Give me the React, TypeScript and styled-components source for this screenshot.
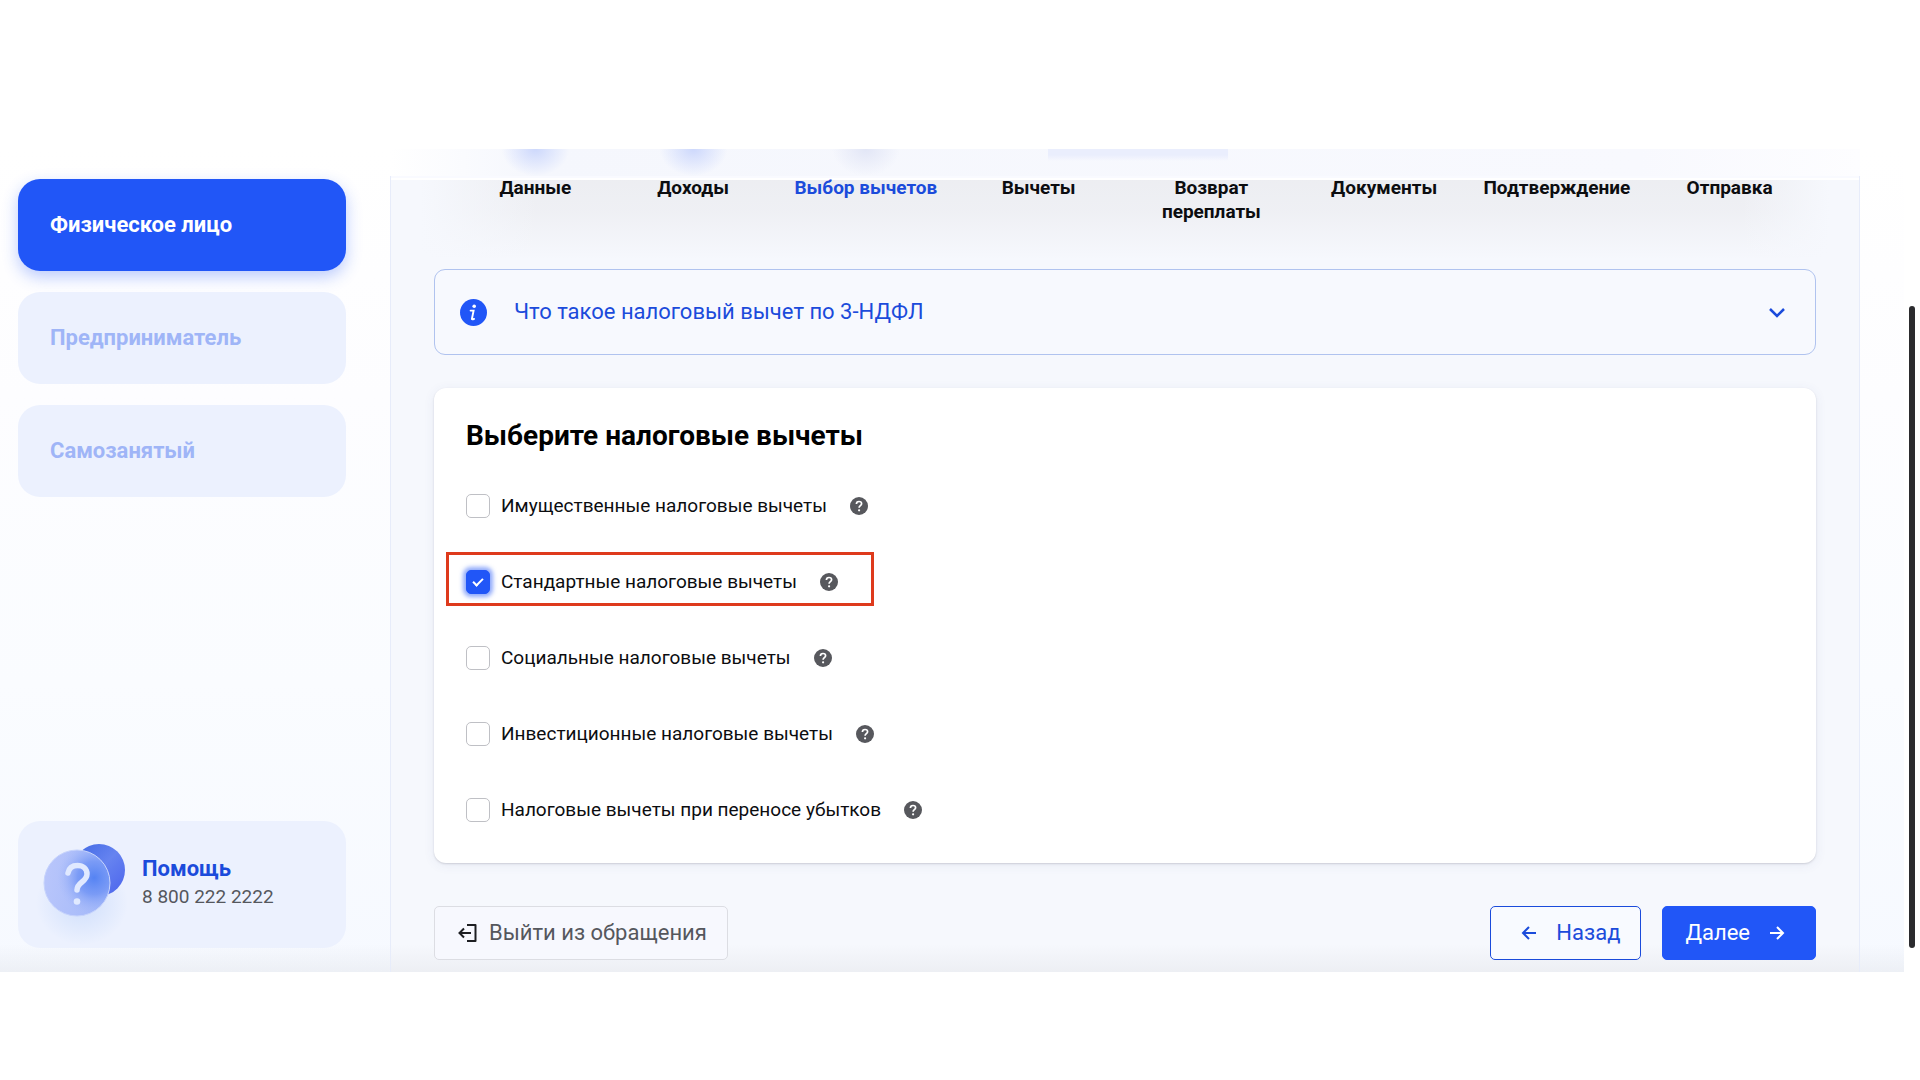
import React, { useState } from "react";
import styled, { createGlobalStyle, css } from "styled-components";

const color = {
  brand: "#2156f7",
  link: "#1b4bdb",
  pale: "#ecf1fe",
  paleText: "#9fb5f7",
  ink: "#0c0d10",
  muted: "#55575d",
  line: "#b0c3ef",
  mark: "#de3a1c",
};

const GlobalStyle = createGlobalStyle`
  *, *::before, *::after { box-sizing: border-box; }
  body {
    margin: 0;
    background: #fff;
    color: ${color.ink};
    font-family: Roboto, "Noto Sans", sans-serif;
  }
  button { font-family: inherit; cursor: pointer; }
`;

const Screen = styled.div`
  display: grid;
  grid-template-columns: minmax(0, 1fr) 16px;
  padding: 149px 0 108px;
`;

const Page = styled.div`
  display: grid;
  grid-template-columns: 390px minmax(0, 1fr);
  background:
    linear-gradient(to top, rgba(90, 90, 90, 0.06), rgba(90, 90, 90, 0) 28px),
    linear-gradient(to bottom, #ffffff 0, #fdfdff 30%, #fafcff 65%, #f6f9ff 100%);
`;

const Sidebar = styled.aside`
  display: flex;
  flex-direction: column;
  justify-content: space-between;
  padding: 30px 44px 24px 18px;
`;

const RoleList = styled.nav`
  display: flex;
  flex-direction: column;
  gap: 21px;
`;

const RoleButton = styled.button<{ $active?: boolean }>`
  height: 92px;
  padding: 0 32px;
  border: 0;
  border-radius: 22px;
  background: ${color.pale};
  color: ${color.paleText};
  font-size: 22px;
  font-weight: 700;
  line-height: 28px;
  text-align: left;
  ${(p) =>
    p.$active &&
    css`
      background: ${color.brand};
      color: #fff;
      box-shadow: 0 6px 16px rgba(33, 86, 247, 0.3);
    `}
`;

const HelpCard = styled.section`
  display: flex;
  align-items: center;
  gap: 4px;
  height: 127px;
  padding-left: 18px;
  border-radius: 22px;
  background: ${color.pale};
`;

const HelpText = styled.div`
  display: flex;
  flex-direction: column;
  padding-bottom: 4px;
`;

const HelpTitle = styled.strong`
  color: ${color.link};
  font-size: 22px;
  line-height: 28px;
`;

const HelpPhone = styled.a`
  color: ${color.muted};
  font-size: 19px;
  line-height: 28px;
  text-decoration: none;
`;

const Main = styled.main`
  display: flex;
  flex-direction: column;
  padding-right: 44px;
`;

const HeaderStrip = styled.div`
  display: grid;
  grid-template-columns: repeat(8, minmax(0, 1fr));
  height: 27px;
  padding: 0 44px;
  background:
    linear-gradient(to bottom, #eaeefd 6px, rgba(234, 238, 253, 0)) 51% 0 / 180px 12px no-repeat,
    linear-gradient(to right, #ffffff, #f5f7fd 10%, #f8f9fe 85%, #fdfdff);
`;

const Glow = styled.span<{ $tone: "blue" | "grey" | "none"; $shift?: boolean }>`
  margin-left: ${(p) => (p.$shift ? "30px" : "0")};
  background: ${(p) =>
    p.$tone === "blue"
      ? "radial-gradient(ellipse 34px 27px at 50% 0, #cdd8fc, rgba(205, 216, 252, 0))"
      : p.$tone === "grey"
        ? "radial-gradient(ellipse 34px 27px at 50% 0, #e2e6f6, rgba(226, 230, 246, 0))"
        : "none"};
`;

const Panel = styled.div`
  flex: 1;
  padding: 0 43px 12px;
  border: solid #e7ecfa;
  border-width: 0 1px;
  background:
    linear-gradient(to bottom, #f9faff 2px, #ffffff 2px, #ffffff 4px, transparent 4px),
    linear-gradient(to top, rgba(90, 90, 90, 0.06), rgba(90, 90, 90, 0) 28px),
    linear-gradient(to right, #f6f8fd 2%, rgba(246, 248, 253, 0) 10%, rgba(246, 248, 253, 0) 92%, #f6f8fd 98%),
    linear-gradient(to bottom, rgba(60, 40, 30, 0.05), rgba(60, 40, 30, 0.04) 36px, rgba(60, 40, 30, 0) 84px),
    #f6f8fd;
`;

const Steps = styled.ol`
  display: grid;
  grid-template-columns: repeat(8, minmax(0, 1fr));
  height: 93px;
  margin: 0;
  padding: 0;
  list-style: none;
`;

const Step = styled.li<{ $current?: boolean }>`
  padding: 0 8px;
  color: ${(p) => (p.$current ? color.link : color.ink)};
  font-size: 19px;
  font-weight: 700;
  line-height: 24px;
  text-align: center;
  &:first-child { padding-left: 38px; }
`;

const Banner = styled.button`
  display: flex;
  align-items: center;
  gap: 27px;
  width: 100%;
  height: 86px;
  padding: 0 26px 0 25px;
  border: 1px solid ${color.line};
  border-radius: 11px;
  background: #f7f9fe;
  color: ${color.link};
  font-size: 22px;
  line-height: 28px;
  text-align: left;
`;

const BannerTitle = styled.span`
  flex: 1;
`;

const Card = styled.form`
  margin-top: 33px;
  padding: 31px 32px 41px;
  border-radius: 12px;
  background: #fff;
  box-shadow: 0 1px 2px rgba(30, 30, 50, 0.16), 0 2px 12px rgba(60, 80, 140, 0.08);
`;

const CardTitle = styled.h1`
  margin: 0 0 41px;
  font-size: 28px;
  font-weight: 700;
  line-height: 34px;
  color: #000;
`;

const Options = styled.div`
  display: flex;
  flex-direction: column;
  align-items: flex-start;
  gap: 52px;
`;

const Option = styled.div`
  position: relative;
  display: flex;
  align-items: center;
  gap: 23px;
  height: 24px;
`;

const OptionLabel = styled.label`
  display: flex;
  align-items: center;
  gap: 11px;
  font-size: 19px;
  line-height: 24px;
  cursor: pointer;
`;

const Check = styled.input`
  appearance: none;
  display: grid;
  place-items: center;
  width: 24px;
  height: 24px;
  margin: 0;
  border: 1px solid #bfc0c5;
  border-radius: 5px;
  background: #fff;
  &:checked {
    border-color: ${color.brand};
    background: ${color.brand};
    box-shadow: 0 0 4px 3px rgba(33, 86, 247, 0.5);
  }
  &:checked::before {
    content: "";
    width: 10px;
    height: 6px;
    margin-bottom: 3px;
    border: solid #fff;
    border-width: 0 0 2px 2px;
    transform: rotate(-45deg);
  }
`;

const HintButton = styled.button`
  display: flex;
  padding: 0;
  border: 0;
  background: none;
`;

const Highlight = styled.span`
  position: absolute;
  inset: -18px -36px -12px -20px;
  border: 3px solid ${color.mark};
  pointer-events: none;
`;

const Actions = styled.div`
  display: flex;
  gap: 21px;
  margin-top: 43px;
`;

const ActionButton = styled.button<{ $kind: "exit" | "outline" | "solid" }>`
  display: flex;
  align-items: center;
  justify-content: center;
  height: 54px;
  border-radius: 5px;
  font-size: 22px;
  line-height: 28px;
  ${(p) =>
    p.$kind === "exit"
      ? css`
          margin-right: auto;
          gap: 10px;
          padding: 0 20px 0 22px;
          border: 1px solid #dcdde3;
          background: #f7f8fe;
          color: ${color.muted};
        `
      : p.$kind === "outline"
        ? css`
            gap: 17px;
            padding: 0 20px 0 28px;
            border: 1px solid ${color.link};
            background: #f8faff;
            color: ${color.link};
          `
        : css`
            gap: 17px;
            padding: 0 28px 0 22px;
            border: 1px solid ${color.brand};
            background: ${color.brand};
            color: #fff;
          `}
`;

const ScrollTrack = styled.div`
  display: flex;
  flex-direction: column;
  padding: 157px 5px 24px;
  background: #fff;
`;

const ScrollThumb = styled.div`
  flex: 1;
  border-radius: 3px;
  background: #2b2b2e;
`;

function HelpIcon() {
  return (
    <svg width="102" height="127" viewBox="0 0 102 127" aria-hidden="true">
      <defs>
        <linearGradient id="helpBack" x1="0" y1="0" x2="1" y2="1">
          <stop offset="0" stopColor="#3f68e4" />
          <stop offset="0.5" stopColor="#6683f0" />
          <stop offset="1" stopColor="#4a63ec" />
        </linearGradient>
        <linearGradient id="helpFront" x1="0" y1="0.3" x2="1" y2="0.5">
          <stop offset="0" stopColor="#b9c6fb" />
          <stop offset="1" stopColor="#a3b8f9" />
        </linearGradient>
        <radialGradient id="helpGlow" cx="0.76" cy="0.42" r="0.56">
          <stop offset="0" stopColor="#5583f3" />
          <stop offset="0.45" stopColor="#6f93f5" stopOpacity="0.8" />
          <stop offset="1" stopColor="#a3b8f9" stopOpacity="0" />
        </radialGradient>
        <radialGradient id="helpShade">
          <stop offset="0" stopColor="#c8dafb" />
          <stop offset="1" stopColor="#c8dafb" stopOpacity="0" />
        </radialGradient>
      </defs>
      <ellipse cx="46" cy="82" rx="46" ry="42" fill="url(#helpShade)" opacity="0.8" />
      <circle cx="63" cy="49" r="26" fill="url(#helpBack)" />
      <circle cx="41" cy="62" r="33" fill="url(#helpFront)" />
      <circle cx="41" cy="62" r="33" fill="url(#helpGlow)" stroke="#c6d3fc" />
      <path
        d="M32 52C33 47 36.500 44.500 41.500 44.500C47 44.500 51 48 51 53C51 61 41 61 41 69"
        fill="none"
        stroke="#e0e9ff"
        strokeWidth="5.500"
        strokeLinecap="round"
        strokeLinejoin="round"
      />
      <circle cx="41" cy="80.500" r="3.300" fill="#e0e9ff" />
    </svg>
  );
}

function InfoIcon() {
  return (
    <svg width="27" height="27" viewBox="0 0 27 27" aria-hidden="true">
      <circle cx="13.5" cy="13.500" r="13.500" fill={color.brand} />
      <circle cx="14.200" cy="7.300" r="1.800" fill="#fff" />
      <path d="M10.600 11.600h3l-1.700 8.200c-.1.700.6.800 2.200.1" fill="none" stroke="#fff" strokeWidth="1.900" strokeLinecap="round" />
    </svg>
  );
}

function Chevron() {
  return (
    <svg width="24" height="24" viewBox="0 0 24 24" fill="none" stroke={color.link} strokeWidth="2.500" aria-hidden="true">
      <path d="M5 9l7 7 7-7" />
    </svg>
  );
}

function QuestionIcon() {
  return (
    <svg width="18" height="18" viewBox="0 0 18 18" aria-hidden="true">
      <circle cx="9" cy="9" r="9" fill="#57585d" />
      <path
        d="M6.400 7.100C6.400 5.400 7.500 4.500 9 4.500s2.600.9 2.600 2.300C11.600 8.700 9.100 8.700 9.100 10.800"
        fill="none"
        stroke="#fff"
        strokeWidth="1.700"
      />
      <circle cx="9.100" cy="13.300" r="1.100" fill="#fff" />
    </svg>
  );
}

function ExitIcon() {
  return (
    <svg width="22" height="22" viewBox="0 0 22 22" fill="none" stroke="#1d1e22" strokeWidth="2" aria-hidden="true">
      <path d="M10 3h8.500v16H10" strokeLinejoin="round" />
      <path d="M14 11H3M7 6.500L2.500 11 7 15.500" />
    </svg>
  );
}

function Arrow({ back }: { back?: boolean }) {
  return (
    <svg width="20" height="20" viewBox="0 0 20 20" fill="none" stroke="currentColor" strokeWidth="2" aria-hidden="true">
      <path d={back ? "M17 10H4M10 4L4 10l6 6" : "M3 10h13M10 4l6 6-6 6"} />
    </svg>
  );
}

const roles = ["Физическое лицо", "Предприниматель", "Самозанятый"];

const steps = [
  "Данные",
  "Доходы",
  "Выбор вычетов",
  "Вычеты",
  "Возврат переплаты",
  "Документы",
  "Подтверждение",
  "Отправка",
];

const glows = ["blue", "blue", "grey", "none", "none", "none", "none", "none"] as const;

const deductions = [
  { id: "property", label: "Имущественные налоговые вычеты" },
  { id: "standard", label: "Стандартные налоговые вычеты", marked: true },
  { id: "social", label: "Социальные налоговые вычеты" },
  { id: "investment", label: "Инвестиционные налоговые вычеты" },
  { id: "losses", label: "Налоговые вычеты при переносе убытков" },
];

export default function App() {
  const [role, setRole] = useState(roles[0]);
  const [picked, setPicked] = useState<string[]>(["standard"]);

  const toggle = (id: string) =>
    setPicked((list) => (list.includes(id) ? list.filter((x) => x !== id) : [...list, id]));

  return (
    <>
      <GlobalStyle />
      <Screen>
        <Page>
          <Sidebar>
            <RoleList>
              {roles.map((name) => (
                <RoleButton key={name} type="button" $active={name === role} onClick={() => setRole(name)}>
                  {name}
                </RoleButton>
              ))}
            </RoleList>
            <HelpCard>
              <HelpIcon />
              <HelpText>
                <HelpTitle>Помощь</HelpTitle>
                <HelpPhone href="tel:88002222222">8 800 222 2222</HelpPhone>
              </HelpText>
            </HelpCard>
          </Sidebar>

          <Main>
            <HeaderStrip>
              {glows.map((tone, i) => (
                <Glow key={i} $tone={tone} $shift={i === 0} />
              ))}
            </HeaderStrip>
            <Panel>
              <Steps>
                {steps.map((name, i) => (
                  <Step key={name} $current={i === 2}>
                    {name}
                  </Step>
                ))}
              </Steps>

              <Banner type="button">
                <InfoIcon />
                <BannerTitle>Что такое налоговый вычет по 3-НДФЛ</BannerTitle>
                <Chevron />
              </Banner>

              <Card>
                <CardTitle>Выберите налоговые вычеты</CardTitle>
                <Options>
                  {deductions.map((d) => (
                    <Option key={d.id}>
                      <OptionLabel htmlFor={d.id}>
                        <Check
                          id={d.id}
                          type="checkbox"
                          checked={picked.includes(d.id)}
                          onChange={() => toggle(d.id)}
                        />
                        {d.label}
                      </OptionLabel>
                      <HintButton type="button" aria-label="Подсказка">
                        <QuestionIcon />
                      </HintButton>
                      {d.marked && <Highlight />}
                    </Option>
                  ))}
                </Options>
              </Card>

              <Actions>
                <ActionButton type="button" $kind="exit">
                  <ExitIcon />
                  Выйти из обращения
                </ActionButton>
                <ActionButton type="button" $kind="outline">
                  <Arrow back />
                  Назад
                </ActionButton>
                <ActionButton type="button" $kind="solid">
                  Далее
                  <Arrow />
                </ActionButton>
              </Actions>
            </Panel>
          </Main>
        </Page>
        <ScrollTrack>
          <ScrollThumb />
        </ScrollTrack>
      </Screen>
    </>
  );
}
